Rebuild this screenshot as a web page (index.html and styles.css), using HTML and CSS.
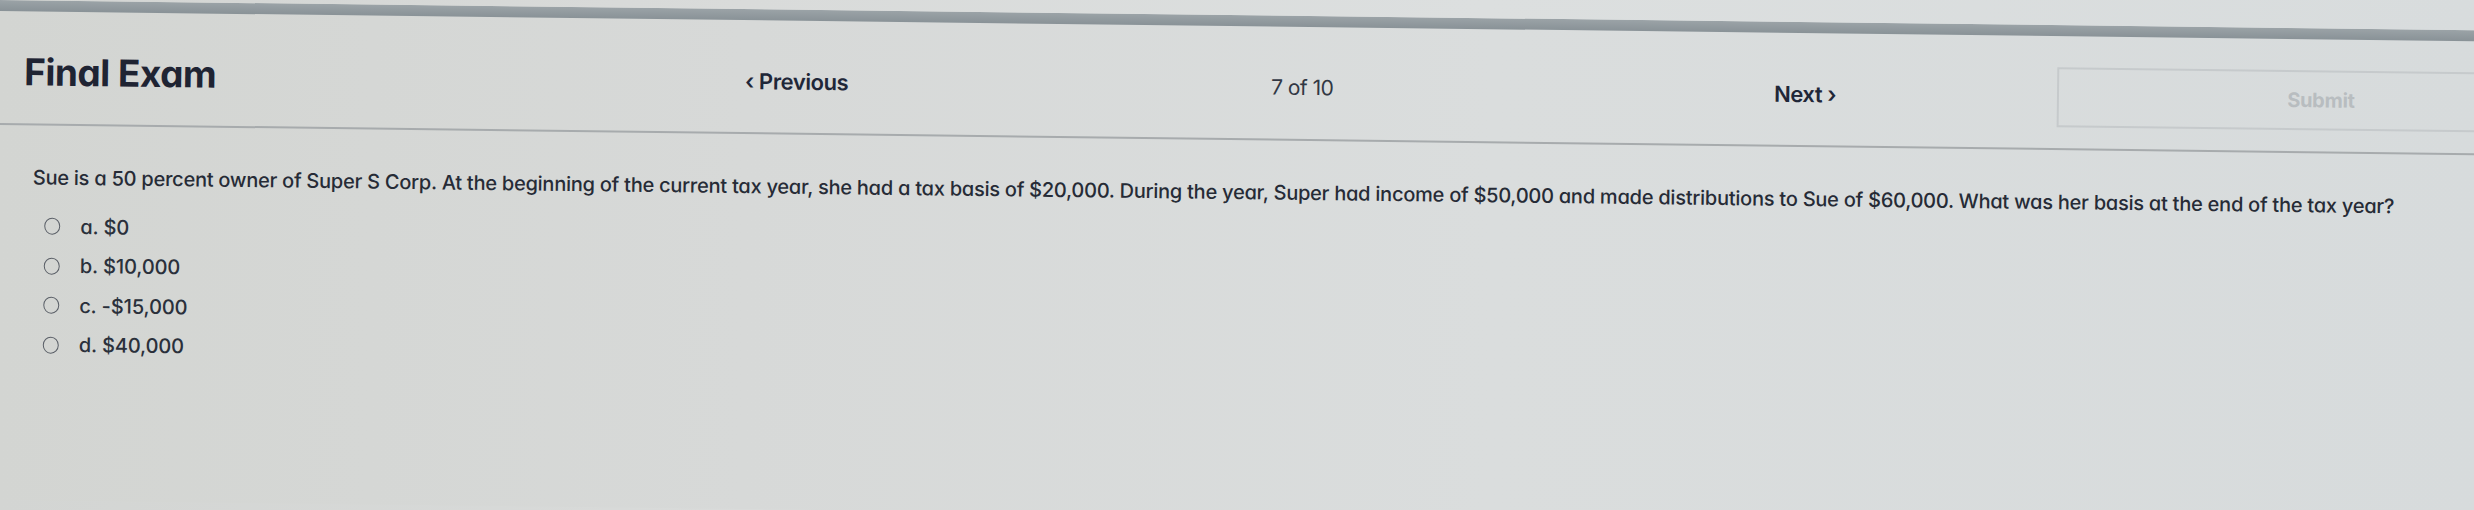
FILE: index.html
```html
<!DOCTYPE html>
<html lang="en">
<head>
<meta charset="utf-8">
<title>Final Exam</title>
<link rel="stylesheet" href="styles.css">
</head>
<body>
<div class="page">
  <div class="topbar"></div>
  <header class="header">
    <div class="title-cell"><h1 class="title">Final Exam</h1></div>
    <div class="prev-cell"><a class="nav-link">&lsaquo; Previous</a></div>
    <div class="count-cell">7 of 10</div>
    <div class="next-cell"><a class="nav-link">Next &rsaquo;</a></div>
    <div class="submit-cell"><button class="submit" disabled>Submit</button></div>
  </header>
  <main class="question">
    <p class="prompt">Sue is a 50 percent owner of Super S Corp. At the beginning of the current tax year, she had a tax basis of $20,000. During the year, Super had income of $50,000 and made distributions to Sue of $60,000. What was her basis at the end of the tax year?</p>
    <ul class="options">
      <li class="option"><span class="radio"></span><span class="label">a. $0</span></li>
      <li class="option"><span class="radio"></span><span class="label">b. $10,000</span></li>
      <li class="option"><span class="radio"></span><span class="label">c. -$15,000</span></li>
      <li class="option"><span class="radio"></span><span class="label">d. $40,000</span></li>
    </ul>
  </main>
</div>
</body>
</html>
```
FILE: styles.css
```css
html, body {
  margin: 0;
  padding: 0;
  height: 100%;
  overflow: hidden;
}
body {
  background: linear-gradient(90deg, #d3d5d3 0%, #d9dbda 30%, #dcdfdf 60%, #d8dcdd 100%);
  font-family: Inter, "Liberation Sans", sans-serif;
  font-feature-settings: "cv11" 1;
  color: #2a303b;
}
.page {
  width: 2490px;
  height: 500px;
  overflow: hidden;
  transform: rotate(0.7deg);
  transform-origin: 0 0;
  background: linear-gradient(90deg, #d3d5d2 0%, #d7d9d8 30%, #dadddd 60%, #d7dbdc 100%);
}
.topbar {
  height: 11px;
  background: linear-gradient(180deg, #9ba3a7 0%, #899297 100%);
}
.header {
  display: flex;
  align-items: center;
  height: 103px;
  padding-top: 9px;
  border-bottom: 2px solid #a7abad;
}
.title-cell {
  width: 746px;
  padding-left: 25px;
  box-sizing: border-box;
  flex: none;
}
.title {
  margin: 0;
  font-size: 37px;
  font-weight: 700;
  letter-spacing: -0.5px;
  color: #1f2433;
}
.prev-cell { width: 526px; flex: none; }
.count-cell {
  width: 503px;
  flex: none;
  font-size: 21px;
  color: #323844;
  letter-spacing: -0.5px;
}
.next-cell { width: 283px; flex: none; }
.nav-link {
  font-size: 22px;
  font-weight: 600;
  color: #1f2738;
  letter-spacing: -0.4px;
}
.submit-cell { width: 528px; flex: none; }
.submit {
  width: 528px;
  height: 60px;
  border: 2px solid #c6cacc;
  background: transparent;
  color: #b8bdc0;
  font-family: inherit;
  font-size: 20px;
  font-weight: 700;
  letter-spacing: -0.3px;
}
.question {
  padding-left: 35px;
  padding-top: 38px;
}
.prompt {
  margin: 0;
  font-size: 20px;
  font-weight: 500;
  line-height: 28px;
  letter-spacing: -0.24px;
  color: #262b36;
}
.options {
  list-style: none;
  margin: 15px 0 0;
  padding: 0;
}
.option {
  display: flex;
  align-items: center;
  height: 39.5px;
}
.radio {
  width: 14px;
  height: 15px;
  margin-left: 12px;
  border: 1.7px solid #5a5f67;
  border-radius: 50%;
  flex: none;
}
.label {
  margin-left: 20px;
  font-size: 20px;
  font-weight: 500;
  letter-spacing: -0.1px;
  color: #2a303b;
}
```
